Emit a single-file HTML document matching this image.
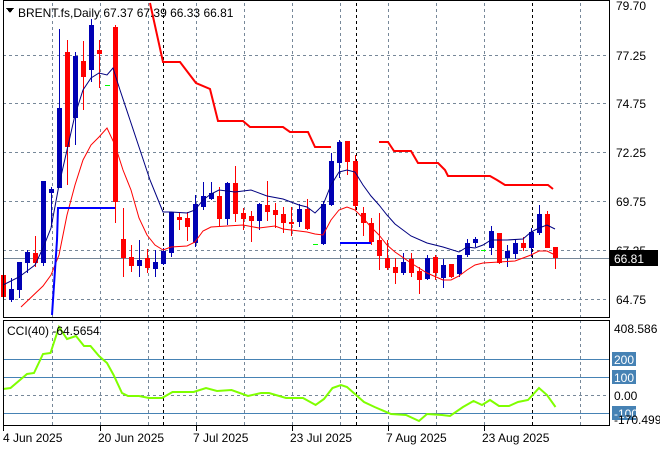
<!DOCTYPE html>
<html><head><meta charset="utf-8"><style>
html,body{margin:0;padding:0;background:#fff;}
svg{display:block;font-family:"Liberation Sans",sans-serif;}
</style></head><body>
<svg id="s" width="660" height="450" viewBox="0 0 660 450" xmlns="http://www.w3.org/2000/svg" shape-rendering="crispEdges">
<rect width="660" height="450" fill="#fff"/>
<g id="grid" stroke="#778899" stroke-width="1" stroke-dasharray="3,3"></g>
<g id="c"></g>
<g font-size="12" fill="#000">
<text x="616" y="10">79.70</text>
<text x="616" y="60">77.25</text>
<text x="616" y="108">74.75</text>
<text x="616" y="157">72.25</text>
<text x="616" y="206">69.75</text>
<text x="616" y="255">67.25</text>
<text x="616" y="304">64.75</text>
</g>
<rect x="610" y="250" width="48" height="16" fill="#000"/>
<text x="614" y="263" font-size="12" fill="#fff">66.81</text>
<polygon points="6,8 14,8 10,13" fill="#000"/>
<text x="18" y="17" font-size="12" fill="#000">BRENT.fs,Daily  67.37 67.39 66.33 66.81</text>
<text x="7" y="335" font-size="12" fill="#000">CCI(40) -64.5654</text>
<g font-size="12">
<text x="614" y="333" fill="#000">408.586</text>
<rect x="612" y="352" width="24" height="14" fill="#4682b4"/><text x="614" y="364" fill="#fff">200</text>
<rect x="612" y="370" width="24" height="14" fill="#4682b4"/><text x="614" y="382" fill="#fff">100</text>
<text x="614" y="400" fill="#000">0.00</text>
<rect x="612" y="406" width="24" height="14" fill="#4682b4"/><text x="614" y="418" fill="#fff">-100</text>
<text x="614" y="424" fill="#000">-170.499</text>
</g>
<g font-size="12" fill="#000">
<text x="3" y="442">4 Jun 2025</text>
<text x="98" y="442">20 Jun 2025</text>
<text x="193" y="442">7 Jul 2025</text>
<text x="290" y="442">23 Jul 2025</text>
<text x="386" y="442">7 Aug 2025</text>
<text x="482" y="442">23 Aug 2025</text>
</g>
</svg>
<script>
var NS="http://www.w3.org/2000/svg";
function el(p,t,a){var e=document.createElementNS(NS,t);for(var k in a)e.setAttribute(k,a[k]);p.appendChild(e);return e;}
var g=document.getElementById('grid'),c=document.getElementById('c');
var vx=[52,100,148,196,244,292,340,388,436,484,532,580];
var blk=[163,356,532];
vx.forEach(function(x){if(blk.indexOf(x)<0){el(g,'line',{x1:x+.5,y1:3,x2:x+.5,y2:318});el(g,'line',{x1:x+.5,y1:320,x2:x+.5,y2:426});}});
[55,103,152,201,250,299].forEach(function(y){el(g,'line',{x1:3,y1:y+.5,x2:610,y2:y+.5});});
el(g,'line',{x1:3,y1:395.5,x2:610,y2:395.5});
blk.forEach(function(x){el(c,'line',{x1:x+.5,y1:3,x2:x+.5,y2:318,stroke:'#000','stroke-dasharray':'3,3'});el(c,'line',{x1:x+.5,y1:320,x2:x+.5,y2:426,stroke:'#000','stroke-dasharray':'3,3'});});
// CCI levels
[359,377,413].forEach(function(y){el(c,'line',{x1:3,y1:y+.5,x2:610,y2:y+.5,stroke:'#4682b4'});});
// price line
el(c,'line',{x1:3,y1:258.5,x2:610,y2:258.5,stroke:'#778899'});
// candles [x,top,bottom,high,low,color]
var d=[[3,275,297,274,300,'r'],[11,289,300,278,302,'b'],[19,262,290,262,298,'b'],[27,252,263,250,273,'b'],[35,253,263,236,267,'r'],[43,181,263,181,266,'b'],[51,189,193,187,227,'b'],[59,108,188,29,188,'b'],[67,52,147,40,185,'r'],[75,56,118,52,145,'b'],[83,61,77,41,110,'r'],[91,25,70,19,82,'b'],[99,50,54,40,88,'r'],[115,27,202,25,223,'r'],[123,239,258,208,277,'r'],[131,257,266,245,272,'r'],[139,260,266,240,277,'b'],[147,258,268,249,273,'r'],[155,262,269,250,277,'b'],[163,251,264,248,265,'b'],[171,212,253,212,257,'b'],[179,217,220,213,230,'r'],[187,218,227,212,241,'r'],[195,204,243,195,247,'b'],[203,196,207,182,210,'b'],[211,193,199,182,200,'b'],[219,196,219,187,226,'r'],[227,183,219,182,225,'b'],[235,183,214,166,222,'r'],[243,213,219,208,230,'r'],[251,216,221,211,242,'r'],[259,204,221,203,230,'b'],[267,205,212,181,221,'r'],[275,210,215,203,228,'r'],[283,214,223,207,233,'r'],[291,222,224,207,236,'r'],[299,209,222,204,227,'b'],[307,209,229,199,230,'r'],[323,204,244,201,245,'b'],[331,161,205,153,206,'b'],[339,142,163,140,178,'b'],[347,141,162,141,175,'r'],[355,161,206,155,210,'r'],[363,213,223,207,236,'r'],[371,223,242,218,245,'r'],[379,240,256,213,270,'r'],[387,258,268,240,270,'r'],[395,267,273,258,284,'r'],[403,262,273,253,275,'b'],[411,259,273,253,277,'r'],[419,271,280,267,294,'r'],[427,258,279,255,280,'b'],[435,257,273,255,280,'r'],[443,265,278,259,288,'b'],[451,264,277,264,278,'r'],[459,255,274,255,277,'b'],[467,243,255,239,257,'b'],[475,239,243,237,247,'b'],[491,231,248,226,255,'b'],[499,233,263,233,264,'r'],[507,251,258,245,267,'b'],[515,243,254,240,259,'b'],[523,243,248,237,251,'r'],[531,232,248,228,257,'b'],[539,214,233,205,235,'b'],[547,214,248,211,248,'r'],[555,247,258,247,269,'r']];
d.forEach(function(k){var col=k[5]=='b'?'#0000b4':'#ff0000';
el(c,'rect',{x:k[0],y:k[3],width:1,height:k[4]-k[3],fill:col});
el(c,'rect',{x:k[0]-2,y:k[1],width:5,height:Math.max(2,k[2]-k[1]),fill:col});});
el(c,'rect',{x:105,y:85,width:5,height:1,fill:'#00ff00'});
el(c,'rect',{x:313,y:244,width:5,height:1,fill:'#00ff00'});
el(c,'rect',{x:481,y:250,width:5,height:1,fill:'#00ff00'});
function pl(pts,col,w){el(c,'polyline',{points:pts,fill:'none',stroke:col,'stroke-width':w,'shape-rendering':'auto'});}
pl("3,285 19,277 35,265 43,248 51,228 59,185 67,150 75,115 83,90 91,78 99,73 107,75 113,68 120,90 130,120 140,150 150,180 163,212 171,212 187,213 195,210 203,200 211,194 219,190 235,192 243,191 251,190 267,196 283,199 291,202 299,205 307,207 315,213 323,205 331,185 339,172 347,170 355,172 363,185 371,196 379,205 387,215 395,224 411,236 427,243 443,247 459,252 467,247 475,248 483,245 491,240 507,240 523,239 531,232 539,228 547,225 555,229","#000080",1);
pl("21,307 43,286 51,275 59,255 67,215 75,185 83,160 91,145 99,137 107,128 115,145 123,170 131,190 139,218 147,235 155,245 163,250 171,247 187,246 195,242 203,231 211,227 227,226 243,225 259,228 275,226 283,229 291,230 307,232 315,234 323,235 331,220 339,210 347,207 355,210 363,218 371,227 379,235 387,245 395,252 411,263 427,273 443,280 451,280 459,276 467,270 475,265 483,263 499,262 515,261 523,258 531,255 539,251 547,251 555,255","#ff0000",1);
pl("150,3 163,62 180,62 196,83 210,89 218,121 243,121 250,127 283,127 290,132 308,132 315,147 331,147","#ff0000",2);
pl("379,142 388,142 394,151 411,151 418,163 438,163 445,170 448,176 490,176 497,180 505,185 548,185 553,189","#ff0000",2);
pl("52,315 55,270 57,240 58,208 115,208","#0000ff",2);
pl("340,243 371,243","#0000ff",2);
pl("3,389 10.5,388 27,374 34,373 43,354 50.5,353 59,327 67,339 76,336 84,346 90.5,346 99,356 107,363 113.6,375 122,393 128,396 139,396 149,398 162,398 172.5,392 183,392 193.6,392 206,388 217,391 231.5,390 248,396 261,393 269,393 286,398 303,398 315.6,405 324,399 332.5,388 341,385 347,387 364,402 374.6,407 391,414 406,415 419,421 427,414 442,415 450,416 463,407 473.5,401 482,405 490,400 499,406 509,406 518,402 528,400 539,388 547,395 555.5,407","#7fff00",2);
// frames
el(c,'rect',{x:3.5,y:0.5,width:606,height:317,fill:'none',stroke:'#000'});
el(c,'rect',{x:3.5,y:320.5,width:606,height:105,fill:'none',stroke:'#000'});
[3,100,196,292,388,484].forEach(function(x){el(c,'line',{x1:x+.5,y1:426,x2:x+.5,y2:431,stroke:'#000'});});
</script>
</body></html>
